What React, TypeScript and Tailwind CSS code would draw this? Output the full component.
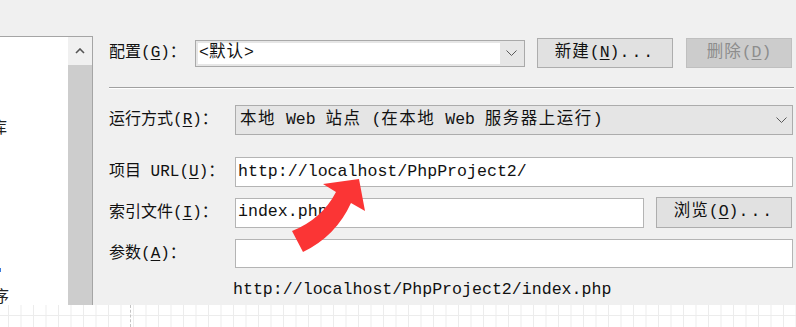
import { ReactNode } from 'react'

const mono = "font-['Liberation_Mono','Noto_Sans_CJK_SC',monospace]"

const Key = ({ k }: { k: string }) => (
  <>
    (<span className="underline underline-offset-2">{k}</span>)
  </>
)

const Label = ({ children, w }: { children: ReactNode; w: string }) => (
  <div
    className={`${w} shrink-0 text-[16px] leading-5 text-[#111] font-['Liberation_Mono','Noto_Sans_CJK_SC',sans-serif]`}
  >
    {children}
  </div>
)

const Chevron = () => (
  <svg width="11" height="7" viewBox="0 0 11 7">
    <polyline points="0.5,0.5 5.5,5.5 10.5,0.5" fill="none" stroke="#5a5a5a" strokeWidth="1" />
  </svg>
)

const Btn = ({ children, disabled }: { children: ReactNode; disabled?: boolean }) => (
  <button
    className={`h-[30px] flex items-center justify-center border text-[16.5px] ${mono} ${
      disabled
        ? 'w-[106px] bg-[#cccccc] border-[#bfbfbf] text-[#8d8d8d]'
        : 'w-[136px] bg-[#e1e1e1] border-[#adadad] text-[#111]'
    }`}
  >
    {children}
  </button>
)

const App = () => {
  return (
    <div className="relative w-[796px] h-[327px] bg-[#f0f0f0] flex flex-col overflow-hidden">
      <div className="flex h-[305px]">
        {/* left list panel */}
        <div className="w-[93px] flex flex-col">
          <div className="h-[37px]" />
          <div className="flex-1 flex border-t border-r border-[#a5a5a5]">
            <div className="w-[68px] bg-white flex flex-col overflow-hidden text-[16px] leading-5 font-['Noto_Sans_CJK_SC',sans-serif] text-[#222]">
              <span className="mt-[79px] -ml-[9px]">库</span>
              <div className="mt-[132px] w-[1px] h-[4px] bg-[#3b7ddd]" />
              <span className="mt-[13px] -ml-[7px]">序</span>
            </div>
            <div className="w-[24px] flex flex-col">
              <div className="h-[28px] bg-[#f0f0f0] flex items-center justify-center">
                <svg width="10" height="6" viewBox="0 0 10 6">
                  <polyline points="1,5 5,1 9,5" fill="none" stroke="#555" strokeWidth="1.6" />
                </svg>
              </div>
              <div className="flex-1 bg-[#cdcdcd]" />
            </div>
          </div>
        </div>

        {/* form */}
        <div className="flex-1 flex flex-col pl-[16px] pr-[3px]">
          {/* 配置 */}
          <div className="mt-[38px] flex items-center h-[30px]">
            <Label w="w-[86px]">
              配置<Key k="G" />：
            </Label>
            <div className="w-[330px] h-[27px] flex border border-[#a9a9a9] bg-[#e6e6e6] p-[2px]">
              <div className={`flex-1 bg-white flex items-center pl-[1px] text-[16.5px] leading-none text-[#111] ${mono}`}>
                &lt;<span className="tracking-[1px]">默认</span>&gt;
              </div>
              <div className="w-[22px] flex items-center justify-center">
                <Chevron />
              </div>
            </div>
            <div className="ml-[12px]">
              <Btn>
                <span className="tracking-[1px]">新建</span>
                <Key k="N" />
                <span className="tracking-[2px]">...</span>
              </Btn>
            </div>
            <div className="ml-[13px]">
              <Btn disabled>
                <span className="tracking-[1px]">删除</span>
                <Key k="D" />
              </Btn>
            </div>
          </div>

          {/* separator */}
          <div className="mt-[19px] h-[2px] border-t border-b border-t-[#a0a0a0] border-b-white -mr-[1px]" />

          {/* 运行方式 */}
          <div className="mt-[16px] flex items-center h-[30px]">
            <Label w="w-[126px]">
              运行方式<Key k="R" />：
            </Label>
            <div
              className={`flex-1 h-[30px] flex items-center justify-between border border-[#acacac] bg-[#e5e5e5] pl-[4px] pr-[5px] text-[16.5px] text-[#111] ${mono}`}
            >
              <span className="whitespace-pre">
                <span className="tracking-[1.5px]">本地</span> Web <span className="tracking-[1.5px]">站点</span> (<span className="tracking-[1.5px]">在本地</span> Web <span className="tracking-[1.5px]">服务器上运行</span>)
              </span>
              <Chevron />
            </div>
          </div>

          {/* URL */}
          <div className="mt-[22px] flex items-center h-[30px]">
            <Label w="w-[126px]">
              项目 URL<Key k="U" />：
            </Label>
            <div className={`flex-1 h-[30px] flex items-center border border-[#b4b4b4] bg-white pl-[2px] text-[16.6px] text-[#111] ${mono}`}>
              http://localhost/PhpProject2/
            </div>
          </div>

          {/* 索引文件 */}
          <div className="mt-[10px] flex items-center h-[31px]">
            <Label w="w-[126px]">
              索引文件<Key k="I" />：
            </Label>
            <div className={`w-[409px] h-[30px] flex items-center border border-[#b4b4b4] bg-white pl-[2px] text-[16.6px] text-[#111] ${mono}`}>
              index.php
            </div>
            <div className="ml-[12px] h-[31px]">
              <button className={`w-[136px] h-[31px] flex items-center justify-center border border-[#adadad] bg-[#e1e1e1] text-[16.5px] text-[#111] ${mono}`}>
                <span className="tracking-[1px]">浏览</span>
                <Key k="O" />
                <span className="tracking-[2px]">...</span>
              </button>
            </div>
          </div>

          {/* 参数 */}
          <div className="mt-[11px] flex items-center h-[29px]">
            <Label w="w-[126px]">
              参数<Key k="A" />：
            </Label>
            <div className="flex-1 h-[29px] border border-[#b4b4b4] bg-white" />
          </div>

          <div className={`mt-[12px] pl-[124px] h-5 leading-5 text-[16.6px] text-[#111] ${mono}`}>
            http://localhost/PhpProject2/index.php
          </div>
        </div>
      </div>

      {/* canvas grid below */}
      <div className="relative flex-1 bg-white bg-[linear-gradient(to_right,#ececec_1px,transparent_1px),linear-gradient(to_bottom,#ececec_1px,transparent_1px)] bg-[size:12.5px_12.5px] bg-[position:8px_10px]">
        <div className="absolute left-[130px] top-0 h-full border-l border-dashed border-[#c4c4c4]" />
      </div>

      {/* red annotation arrow */}
      <svg className="absolute inset-0 pointer-events-none" width="796" height="327" viewBox="0 0 796 327">
        <path
          d="M 323 184 L 359 179 L 365 211 L 351 203 Q 336 236 303 252 L 292 231 Q 322 219 336 192 Z"
          fill="#fb3535"
        />
      </svg>
    </div>
  )
}

export default App
